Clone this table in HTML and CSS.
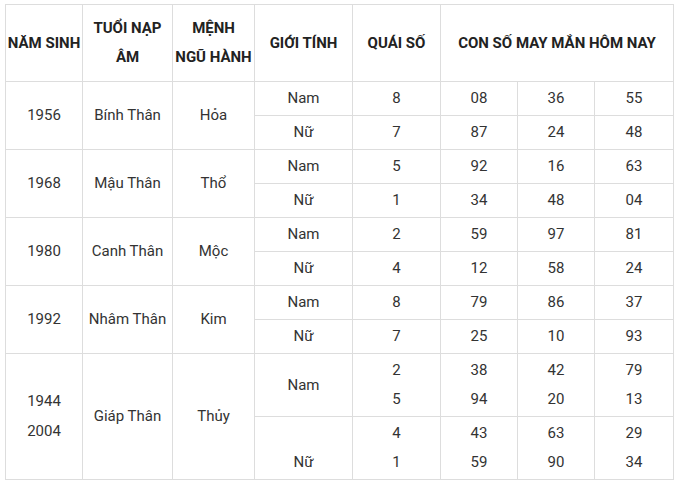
FILE: index.html
```html
<!DOCTYPE html>
<html lang="vi">
<head>
<meta charset="utf-8">
<link rel="stylesheet" href="styles.css">
</head>
<body>
<table class="lucky">
  <colgroup>
    <col class="c1"><col class="c2"><col class="c3"><col class="c4"><col class="c5"><col class="c6"><col class="c7"><col class="c8">
  </colgroup>
  <thead>
    <tr class="head">
      <th>NĂM SINH</th>
      <th>TUỔI NẠP<br>ÂM</th>
      <th>MỆNH<br>NGŨ HÀNH</th>
      <th>GIỚI TÍNH</th>
      <th>QUÁI SỐ</th>
      <th colspan="3">CON SỐ MAY MẮN HÔM NAY</th>
    </tr>
  </thead>
  <tbody>
    <tr class="sub"><td rowspan="2">1956</td><td rowspan="2">Bính Thân</td><td rowspan="2">Hỏa</td><td>Nam</td><td>8</td><td>08</td><td>36</td><td>55</td></tr>
    <tr class="sub"><td>Nữ</td><td>7</td><td>87</td><td>24</td><td>48</td></tr>
    <tr class="sub"><td rowspan="2">1968</td><td rowspan="2">Mậu Thân</td><td rowspan="2">Thổ</td><td>Nam</td><td>5</td><td>92</td><td>16</td><td>63</td></tr>
    <tr class="sub"><td>Nữ</td><td>1</td><td>34</td><td>48</td><td>04</td></tr>
    <tr class="sub"><td rowspan="2">1980</td><td rowspan="2">Canh Thân</td><td rowspan="2">Mộc</td><td>Nam</td><td>2</td><td>59</td><td>97</td><td>81</td></tr>
    <tr class="sub"><td>Nữ</td><td>4</td><td>12</td><td>58</td><td>24</td></tr>
    <tr class="sub"><td rowspan="2">1992</td><td rowspan="2">Nhâm Thân</td><td rowspan="2">Kim</td><td>Nam</td><td>8</td><td>79</td><td>86</td><td>37</td></tr>
    <tr class="sub"><td>Nữ</td><td>7</td><td>25</td><td>10</td><td>93</td></tr>
    <tr class="tall"><td rowspan="2" class="multi wide">1944<br>2004</td><td rowspan="2">Giáp Thân</td><td rowspan="2">Thủy</td><td>Nam</td><td class="multi">2<br>5</td><td class="multi">38<br>94</td><td class="multi">42<br>20</td><td class="multi">79<br>13</td></tr>
    <tr class="tall"><td class="multi"><br>Nữ</td><td class="multi">4<br>1</td><td class="multi">43<br>59</td><td class="multi">63<br>90</td><td class="multi">29<br>34</td></tr>
  </tbody>
</table>
</body>
</html>
```
FILE: styles.css
```css
html, body {
  margin: 0;
  padding: 0;
  background: #ffffff;
}
body {
  padding: 4px 0 0 5px;
  font-family: Roboto, "Liberation Sans", Arial, sans-serif;
  color: #333333;
}
.lucky {
  border-collapse: collapse;
  table-layout: fixed;
  width: 668px;
  font-size: 15px;
}
.c1 { width: 77px; }
.c2 { width: 90px; }
.c3 { width: 82px; }
.c4 { width: 98px; }
.c5 { width: 88px; }
.c6 { width: 77px; }
.c7 { width: 77px; }
.c8 { width: 79px; }
.lucky th,
.lucky td {
  border: 1px solid #dddddd;
  padding: 0;
  text-align: center;
  vertical-align: middle;
}
.lucky th {
  font-weight: 700;
  font-size: 15px;
  line-height: 29px;
  color: #222222;
}
.head { height: 77px; }
.sub { height: 34px; }
.tall { height: 63px; }
.lucky td { line-height: 20px; padding-bottom: 1px; }
.lucky td.multi { line-height: 29px; padding-bottom: 1px; }
.lucky td.wide { line-height: 30px; }
```
